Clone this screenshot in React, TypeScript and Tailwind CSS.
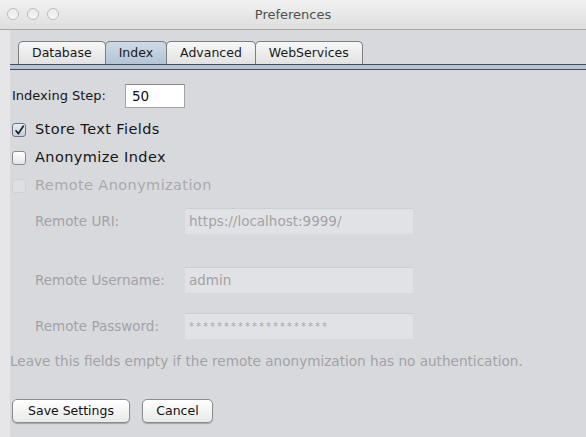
import React from "react";

const font = { fontFamily: '"DejaVu Sans", "Liberation Sans", sans-serif' };

function Tab({ label, active, first }: { label: string; active?: boolean; first?: boolean }) {
  return (
    <div
      className={
        "h-[23px] flex items-center justify-center rounded-t-[5px] border border-b-0 border-[#7d7d80] text-[12.5px] text-[#1a1a1a] " +
        (first ? "" : "-ml-px ") +
        (active
          ? "bg-gradient-to-b from-[#cfdae6] to-[#b2c4d6] relative z-10"
          : "bg-gradient-to-b from-[#f7f7f7] to-[#e2e2e2]")
      }
    >
      <span className="px-[13px]">{label}</span>
    </div>
  );
}

function Check({ checked, disabled, label }: { checked?: boolean; disabled?: boolean; label: string }) {
  return (
    <div className="flex items-center h-[28px] pl-[2px]">
      <div
        className={
          "w-[14px] h-[14px] rounded-[3px] border flex items-center justify-center " +
          (disabled
            ? "border-[#cfd0d3] bg-[#dedfe2]"
            : checked
            ? "border-[#6b7480] bg-gradient-to-b from-[#e9eef4] to-[#c5d0dc]"
            : "border-[#8a8a8d] bg-gradient-to-b from-[#ffffff] to-[#e4e4e4]")
        }
      >
        {checked && (
          <svg width="11" height="11" viewBox="0 0 11 11">
            <path d="M2 5.8 L4.4 8.6 L9.2 1.2" fill="none" stroke="#1c1c1c" strokeWidth="1.7" strokeLinecap="round" strokeLinejoin="round" />
          </svg>
        )}
      </div>
      <span className={"ml-[9px] text-[14.5px] tracking-[0.4px] " + (disabled ? "text-[#a9a9ac]" : "text-[#161616]")}>{label}</span>
    </div>
  );
}

function Field({ label, value, secret }: { label: string; value: string; secret?: boolean }) {
  return (
    <div className="flex items-center h-[26px]">
      <div className="w-[175px] pl-[25px] text-[13.5px] text-[#a2a2a5]">{label}</div>
      <div className="w-[228px] h-[26px] bg-[#e1e2e5] border-t border-[#cdced2] flex items-center pl-[4px]">
        <span className={secret ? "text-[10px] text-[#a8a8ab] tracking-[2px]" : "text-[13.5px] text-[#a2a2a5]"}>{value}</span>
      </div>
    </div>
  );
}

function Button({ label, w }: { label: string; w: string }) {
  return (
    <div
      className={
        "h-[24px] rounded-[5px] border border-[#8c8c8f] bg-gradient-to-b from-[#ffffff] to-[#e9e9e9] shadow-[0_1px_1px_rgba(0,0,0,0.25)] flex items-center justify-center text-[12.5px] text-[#111] " +
        w
      }
    >
      {label}
    </div>
  );
}

export default function App() {
  return (
    <div className="w-[586px] h-[437px] overflow-hidden flex flex-col bg-[#d8d9dd]" style={font}>
      {/* title bar */}
      <div className="h-[30px] shrink-0 relative flex items-center justify-center bg-gradient-to-b from-[#f1f1f1] to-[#dedede] border-b border-[#a9a9a9]">
        <div className="absolute left-[7px] top-[8px] flex gap-[8px]">
          {[0, 1, 2].map((i) => (
            <div key={i} className="w-[12px] h-[12px] rounded-full border border-[#bdbdbd] bg-gradient-to-b from-[#e9e9e9] to-[#f7f7f7]" />
          ))}
        </div>
        <span className="text-[13px] text-[#4f4f4f]">Preferences</span>
      </div>

      <div className="flex-1 flex">
        <div className="w-[10px] shrink-0 bg-[#e6e6e8]" />
        <div className="flex-1 flex flex-col">
          {/* tabs */}
          <div className="mt-[11px] flex pl-[8px]">
            <Tab label="Database" first />
            <Tab label="Index" active />
            <Tab label="Advanced" />
            <Tab label="WebServices" />
          </div>
          <div className="h-[6px] border-y border-[#4a4c55] bg-[#b4c5d7]" />

          {/* indexing step */}
          <div className="mt-[14px] flex items-center h-[24px] pl-[2px]">
            <span className="text-[13px] text-[#161616] w-[113px]">Indexing Step:</span>
            <div className="w-[60px] h-[24px] bg-white border border-[#a4a4a7] border-t-[#8a8a8d] flex items-center pl-[6px] text-[13.5px] text-[#111]">
              50
            </div>
          </div>

          <div className="mt-[8px]">
            <Check checked label="Store Text Fields" />
            <Check label="Anonymize Index" />
            <Check disabled label="Remote Anonymization" />
          </div>

          <div className="mt-[8px]">
            <Field label="Remote URI:" value="https://localhost:9999/" />
          </div>
          <div className="mt-[33px]">
            <Field label="Remote Username:" value="admin" />
          </div>
          <div className="mt-[20px]">
            <Field label="Remote Password:" value="********************" secret />
          </div>

          <div className="mt-[12px] h-[20px] flex items-center text-[13.6px] text-[#a2a2a5]">
            Leave this fields empty if the remote anonymization has no authentication.
          </div>

          <div className="mt-[28px] flex gap-[12px] pl-[2px]">
            <Button label="Save Settings" w="w-[118px]" />
            <Button label="Cancel" w="w-[71px]" />
          </div>
        </div>
      </div>
    </div>
  );
}
